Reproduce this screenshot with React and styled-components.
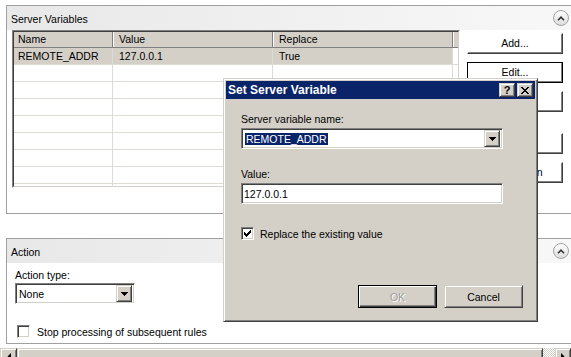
import React from 'react';
import styled, { createGlobalStyle } from 'styled-components';

const GlobalStyle = createGlobalStyle`
  html, body {
    margin: 0;
    padding: 0;
    background: #fff;
  }
  body {
    font-family: "Liberation Sans", Arial, sans-serif;
    font-size: 10.5px;
    color: #000;
  }
  * { box-sizing: border-box; }
`;

const raised = `
  background: #d4d0c8;
  border: 1px solid;
  border-color: #d4d0c8 #404040 #404040 #d4d0c8;
  box-shadow: inset 1px 1px #fff, inset -1px -1px #808080;
`;

const sunken = `
  background: #fff;
  border: 1px solid;
  border-color: #808080 #fff #fff #808080;
  box-shadow: inset 1px 1px #404040, inset -1px -1px #d4d0c8;
`;

const Screen = styled.div`
  position: relative;
  width: 571px;
  height: 357px;
  overflow: hidden;
  background: #fff;
  padding-top: 5px;
`;

const Group = styled.section`
  margin-left: 6px;
  margin-top: ${p => p.$top || 0}px;
  width: 570px;
  height: ${p => p.$height}px;
  border: 1px solid #a0a0a0;
  display: flex;
  flex-direction: column;
`;

const GroupHeader = styled.div`
  height: 24px;
  flex: none;
  display: flex;
  align-items: center;
  padding: 0 6px 0 4px;
  background: linear-gradient(to right, #e8e8e8, #f8f8f8);
`;

const GroupTitle = styled.span`
  flex: 1;
  padding-top: 1px;
`;

const CollapseButton = styled.span`
  width: 16px;
  height: 16px;
  border-radius: 50%;
  border: 1px solid #a3a3a3;
  background: linear-gradient(#ffffff, #dcdcdc);
  display: flex;
  align-items: center;
  justify-content: center;
`;

const GroupBody = styled.div`
  display: flex;
  align-items: flex-start;
  gap: 7px;
  padding-left: 5px;
`;

const ListView = styled.div`
  width: 448px;
  height: 158px;
  border: 1px solid;
  border-color: #808080 #fff #fff #808080;
  overflow: hidden;
`;

const ListInner = styled.div`
  height: 100%;
  border: 1px solid;
  border-color: #404040 #d4d0c8 #d4d0c8 #404040;
  overflow: hidden;
`;

const HeaderRow = styled.div`
  display: flex;
  height: 16px;
  background: #d4d0c8;
  border-bottom: 1px solid #808080;
`;

const HeaderCell = styled.div`
  width: ${p => p.$width}px;
  flex: none;
  padding-left: 6px;
  line-height: 15px;
  border-right: 1px solid #808080;
  box-shadow: inset 1px 0 #fff;
  &:first-child { padding-left: 4px; box-shadow: none; }
`;

const HeaderFiller = styled.div`
  flex: 1;
  box-shadow: inset 1px 0 #fff;
`;

const Row = styled.div`
  display: flex;
  height: 17px;
  border-bottom: 1px solid #dedbd4;
`;

const Cell = styled.div`
  width: ${p => p.$width}px;
  flex: none;
  padding-left: 6px;
  line-height: 16px;
  border-right: 1px solid #dedbd4;
  white-space: nowrap;
  background: ${p => (p.$selected ? '#d4d0c8' : '#fff')};
  &:first-child { padding-left: 4px; }
`;

const ButtonColumn = styled.div`
  display: flex;
  flex-direction: column;
  padding-top: 3px;
  gap: 8px;
`;

const SideButton = styled.div`
  width: 96px;
  height: 21px;
  margin-top: ${p => p.$gap || 0}px;
  background: #fff;
  border: 1px solid;
  border-color: ${p => (p.$default ? '#000' : '#fff #404040 #404040 #fff')};
  box-shadow: inset -1px -1px #808080;
  display: flex;
  align-items: center;
  justify-content: center;
  padding-bottom: 1px;
`;

const ActionBody = styled.div`
  padding: 5px 0 0 8px;
  display: flex;
  flex-direction: column;
  align-items: flex-start;
`;

const FieldLabel = styled.div`
  line-height: 14px;
  margin-top: ${p => p.$top || 0}px;
`;

const ComboBox = styled.div`
  ${sunken}
  width: ${p => p.$width}px;
  height: ${p => p.$height || 21}px;
  margin-top: ${p => p.$top || 1}px;
  display: flex;
  align-items: center;
  padding: 2px;
`;

const ComboText = styled.span`
  flex: 1;
  padding-left: 1px;
`;

const Selected = styled.span`
  background: #0a246a;
  color: #fff;
  line-height: 14px;
  padding: 0 1px;
`;

const DropButton = styled.span`
  ${raised}
  width: 16px;
  height: 17px;
  display: flex;
  align-items: center;
  justify-content: center;
`;

const CheckRow = styled.label`
  display: flex;
  align-items: center;
  gap: ${p => p.$gap || 7}px;
  margin-top: ${p => p.$top}px;
  margin-left: ${p => p.$left || 0}px;
`;

const CheckBox = styled.span`
  ${sunken}
  width: 13px;
  height: 13px;
  display: flex;
  align-items: center;
  justify-content: center;
`;

const ScrollBar = styled.div`
  display: flex;
  height: 17px;
  margin-top: 4px;
`;

const ScrollArrow = styled.span`
  ${raised}
  width: ${p => p.$width}px;
  flex: none;
  display: flex;
  align-items: center;
  justify-content: center;
`;

const ScrollThumb = styled.span`
  ${raised}
  flex: 1;
`;

const ScrollTrack = styled.span`
  width: 12px;
  flex: none;
  background: repeating-conic-gradient(#d4d0c8 0 25%, #fff 0 50%) 0 0 / 2px 2px;
`;

const Dialog = styled.div`
  position: absolute;
  left: 223px;
  top: 78px;
  width: 315px;
  height: 244px;
  background: #d4d0c8;
  border: 1px solid;
  border-color: #d4d0c8 #404040 #404040 #d4d0c8;
  box-shadow: inset 1px 1px #fff, inset -1px -1px #808080;
  padding: 2px;
  display: flex;
  flex-direction: column;
`;

const TitleBar = styled.div`
  height: 18px;
  background: #0a246a;
  color: #fff;
  font-weight: bold;
  font-size: 12px;
  display: flex;
  align-items: center;
  padding: 0 2px 0 2px;
`;

const TitleText = styled.span`
  flex: 1;
`;

const CaptionButton = styled.span`
  ${raised}
  width: 16px;
  height: 14px;
  margin-left: ${p => p.$gap || 0}px;
  display: flex;
  align-items: center;
  justify-content: center;
  color: #000;
  font-size: 11px;
  font-weight: bold;
  line-height: 1;
`;

const DialogBody = styled.div`
  padding: 0 0 0 15px;
  display: flex;
  flex-direction: column;
  align-items: flex-start;
`;

const TextField = styled.div`
  ${sunken}
  width: 262px;
  height: 21px;
  margin-top: 2px;
  padding-left: 2px;
  display: flex;
  align-items: center;
`;

const ButtonRow = styled.div`
  align-self: stretch;
  display: flex;
  justify-content: flex-end;
  gap: 7px;
  padding-right: 12px;
  margin-top: 45px;
`;

const DialogButton = styled.div`
  ${raised}
  width: 79px;
  height: 23px;
  display: flex;
  align-items: center;
  justify-content: center;
  ${p => p.$default && `
    border-color: #000;
    box-shadow: inset 1px 1px #fff, inset -1px -1px #404040, inset -2px -2px #808080;
  `}
  color: ${p => (p.$disabled ? '#a09d97' : '#000')};
  text-shadow: ${p => (p.$disabled ? '1px 1px #fff' : 'none')};
`;

const Chevron = () => (
  <svg width="8" height="5" viewBox="0 0 8 5">
    <path d="M1 4.2 L4 1.2 L7 4.2" fill="none" stroke="#333" strokeWidth="1.6" />
  </svg>
);

const DownArrow = () => (
  <svg width="7" height="4" viewBox="0 0 7 4" shapeRendering="crispEdges">
    <path d="M0 0h7v1h-7z M1 1h5v1h-5z M2 2h3v1h-3z M3 3h1v1h-1z" fill="#000" />
  </svg>
);

const CheckMark = () => (
  <svg width="7" height="7" viewBox="0 0 7 7" shapeRendering="crispEdges">
    <path
      d="M6 0h1v1h-1z M5 1h2v1h-2z M0 2h1v1h-1z M4 2h3v1h-3z M0 3h2v1h-2z M3 3h3v1h-3z M0 4h5v1h-5z M1 5h3v1h-3z M2 6h1v1h-1z"
      fill="#000"
    />
  </svg>
);

const CloseGlyph = () => (
  <svg width="8" height="7" viewBox="0 0 8 7" shapeRendering="crispEdges">
    <path
      d="M0 0h2v1h-2z M6 0h2v1h-2z M1 1h2v1h-2z M5 1h2v1h-2z M2 2h4v1h-4z M3 3h2v1h-2z M2 4h4v1h-4z M1 5h2v1h-2z M5 5h2v1h-2z M0 6h2v1h-2z M6 6h2v1h-2z"
      fill="#000"
    />
  </svg>
);

const ArrowGlyph = ({ dir }) => (
  <svg width="4" height="7" viewBox="0 0 4 7">
    <path d={dir === 'left' ? 'M4 0 V7 L0.5 3.5 Z' : 'M0 0 V7 L3.5 3.5 Z'} fill="#000" />
  </svg>
);

const columns = [
  { title: 'Name', width: 99 },
  { title: 'Value', width: 160 },
  { title: 'Replace', width: 180 },
];

const rows = [['REMOTE_ADDR', '127.0.0.1', 'True'], [], [], [], [], [], [], [], []];

export default function App() {
  return (
    <>
      <GlobalStyle />
      <Screen>
        <Group $height={209}>
          <GroupHeader>
            <GroupTitle>Server Variables</GroupTitle>
            <CollapseButton><Chevron /></CollapseButton>
          </GroupHeader>
          <GroupBody>
            <ListView>
              <ListInner>
                <HeaderRow>
                  {columns.map(c => (
                    <HeaderCell key={c.title} $width={c.width}>{c.title}</HeaderCell>
                  ))}
                  <HeaderFiller />
                </HeaderRow>
                {rows.map((r, i) => (
                  <Row key={i}>
                    {columns.map((c, j) => (
                      <Cell key={c.title} $width={c.width} $selected={i === 0}>{r[j]}</Cell>
                    ))}
                  </Row>
                ))}
              </ListInner>
            </ListView>
            <ButtonColumn>
              <SideButton>Add...</SideButton>
              <SideButton $default>Edit...</SideButton>
              <SideButton>Remove</SideButton>
              <SideButton $gap={13}>Move Up</SideButton>
              <SideButton>Move Down</SideButton>
            </ButtonColumn>
          </GroupBody>
        </Group>

        <Group $top={24} $height={106}>
          <GroupHeader>
            <GroupTitle>Action</GroupTitle>
            <CollapseButton><Chevron /></CollapseButton>
          </GroupHeader>
          <ActionBody>
            <FieldLabel>Action type:</FieldLabel>
            <ComboBox $width={120}>
              <ComboText>None</ComboText>
              <DropButton><DownArrow /></DropButton>
            </ComboBox>
            <CheckRow $top={21} $left={2}>
              <CheckBox />
              <span>Stop processing of subsequent rules</span>
            </CheckRow>
          </ActionBody>
        </Group>

        <ScrollBar>
          <ScrollArrow $width={17}><ArrowGlyph dir="left" /></ScrollArrow>
          <ScrollThumb />
          <ScrollTrack />
          <ScrollArrow $width={16}><ArrowGlyph dir="right" /></ScrollArrow>
        </ScrollBar>

        <Dialog>
          <TitleBar>
            <TitleText>Set Server Variable</TitleText>
            <CaptionButton>?</CaptionButton>
            <CaptionButton $gap={2}><CloseGlyph /></CaptionButton>
          </TitleBar>
          <DialogBody>
            <FieldLabel $top={13}>Server variable name:</FieldLabel>
            <ComboBox $width={262} $top={2}>
              <ComboText><Selected>REMOTE_ADDR</Selected></ComboText>
              <DropButton><DownArrow /></DropButton>
            </ComboBox>
            <FieldLabel $top={18}>Value:</FieldLabel>
            <TextField>127.0.0.1</TextField>
            <CheckRow $top={23} $gap={6}>
              <CheckBox><CheckMark /></CheckBox>
              <span>Replace the existing value</span>
            </CheckRow>
            <ButtonRow>
              <DialogButton $default $disabled>OK</DialogButton>
              <DialogButton>Cancel</DialogButton>
            </ButtonRow>
          </DialogBody>
        </Dialog>
      </Screen>
    </>
  );
}
